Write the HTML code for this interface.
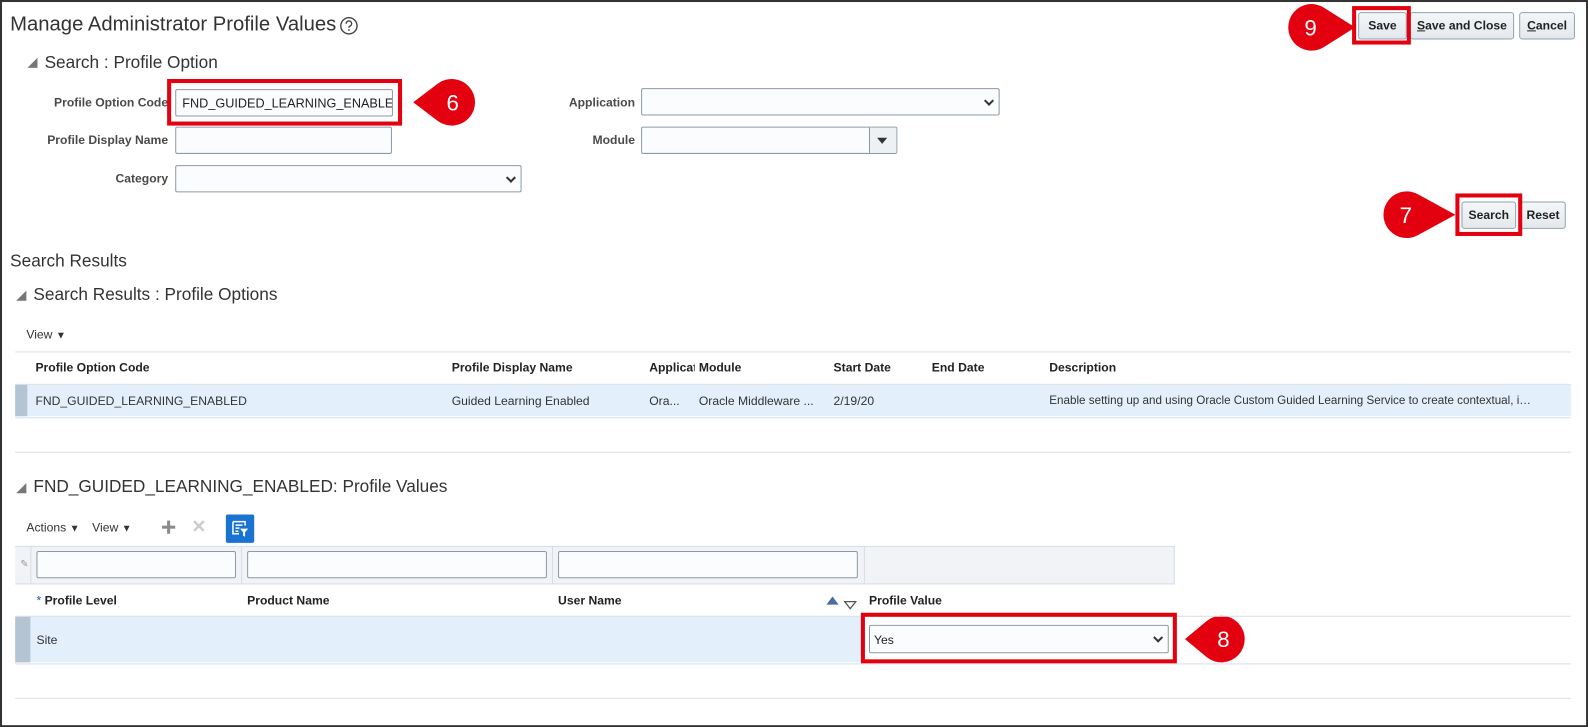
<!DOCTYPE html>
<html><head><meta charset="utf-8"><style>
*{box-sizing:border-box;margin:0;padding:0}
body{width:1588px;height:727px;background:#fff;font-family:"Liberation Sans",Arial,sans-serif;color:#333;position:relative;overflow:hidden}
#w{position:absolute;left:0;top:0;width:1568px;height:718px;transform:scale(1.0128);transform-origin:0 0}
.frame{position:absolute;left:0;top:0;width:1568px;height:718px;border:2px solid #333}
.a{position:absolute;white-space:nowrap}
.lbl{position:absolute;font-size:12px;font-weight:bold;color:#4a4a4a;text-align:right;white-space:nowrap}
.inp{position:absolute;border:1px solid #8c9aa7;background:#fbfcfe;border-radius:2px}
.chev{position:absolute;right:6px;top:50%;width:7px;height:7px;border-right:2px solid #333;border-bottom:2px solid #333;transform:translateY(-70%) rotate(45deg)}
.btn{position:absolute;border:1px solid #8ea2b3;border-radius:3px;background:linear-gradient(#f4f6f8,#e4e8ec);font-size:12px;font-weight:bold;color:#222;text-align:center;line-height:24px}
.red{position:absolute;border:4px solid #e3000f}
.tri{position:absolute;width:0;height:0;border-left:10px solid transparent;border-bottom:10px solid #777}
.h2{position:absolute;font-size:17px;color:#333;white-space:nowrap}
.hl{position:absolute;height:1px;background:#d6dfe7}
.th{position:absolute;font-size:12px;font-weight:bold;color:#222;white-space:nowrap}
.td{position:absolute;font-size:12px;color:#333;white-space:nowrap}
</style></head><body><div id="w">
<div class="frame"></div>

<div class="a" style="left:10px;top:13px;font-size:20px;color:#333">Manage Administrator Profile Values</div>
<svg class="a" style="left:335px;top:16px" width="19" height="19" viewBox="0 0 19 19"><circle cx="9.5" cy="9.5" r="8" fill="none" stroke="#444" stroke-width="1.4"/><path d="M6.8 7.4a2.7 2.7 0 1 1 3.6 2.5c-.7.3-.9.7-.9 1.5" fill="none" stroke="#444" stroke-width="1.4"/><circle cx="9.5" cy="13.6" r=".9" fill="#444"/></svg>

<div class="tri" style="left:27px;top:57px"></div>
<div class="h2" style="left:44px;top:52px">Search : Profile Option</div>

<div class="lbl" style="left:20px;width:146px;top:94px">Profile Option Code</div>
<div class="inp" style="left:173px;top:88px;width:215px;height:27px;overflow:hidden"><span class="a" style="left:6px;top:6px;font-size:12.5px;color:#222">FND_GUIDED_LEARNING_ENABLED</span></div>
<div class="red" style="left:165px;top:78px;width:232px;height:46px"></div>
<div class="lbl" style="left:20px;width:146px;top:131px">Profile Display Name</div>
<div class="inp" style="left:173px;top:125px;width:214px;height:27px"></div>
<div class="lbl" style="left:20px;width:146px;top:169px">Category</div>
<div class="inp" style="left:173px;top:163px;width:342px;height:27px"><div class="chev"></div></div>

<div class="lbl" style="left:500px;width:127px;top:94px">Application</div>
<div class="inp" style="left:633px;top:87px;width:354px;height:27px"><div class="chev"></div></div>
<div class="lbl" style="left:500px;width:127px;top:131px">Module</div>
<div class="inp" style="left:633px;top:125px;width:253px;height:27px"><div style="position:absolute;right:0;top:0;width:27px;height:25px;border-left:1px solid #8c9aa7;background:#eef1f4"></div><div class="a" style="right:9px;top:10px;border-left:5px solid transparent;border-right:5px solid transparent;border-top:6px solid #333"></div></div>

<div class="btn" style="left:1341px;top:12px;width:48px;height:27px">Save</div>
<div class="btn" style="left:1392px;top:12px;width:103px;height:27px"><u>S</u>ave and Close</div>
<div class="btn" style="left:1500px;top:12px;width:55px;height:27px"><u>C</u>ancel</div>
<div class="red" style="left:1335px;top:6px;width:58px;height:38px"></div>

<div class="btn" style="left:1443px;top:199px;width:54px;height:27px">Search</div>
<div class="btn" style="left:1501px;top:199px;width:45px;height:27px">Reset</div>
<div class="red" style="left:1437px;top:191px;width:66px;height:42px"></div>

<svg class="a" style="left:0;top:0" width="1568" height="718">
<g fill="#e3000f">
<path d="M408 101 L432.1 82.7 A23 23 0 1 1 432.1 119.3 Z"/>
<path d="M1338 27 L1307.3 7.6 A23 23 0 1 0 1307.3 46.4 Z"/>
<path d="M1437 212 L1400 191.8 A23 23 0 1 0 1400 232.2 Z"/>
<path d="M1170 631 L1191.3 613.3 A23 23 0 1 1 1191.3 648.7 Z"/>
</g>
<g fill="#fff" font-family="Liberation Sans,Arial,sans-serif" font-size="22" text-anchor="middle">
<text x="447" y="109">6</text><text x="1294" y="35">9</text><text x="1388" y="220">7</text><text x="1208" y="639">8</text>
</g></svg>

<div class="h2" style="left:10px;top:248px">Search Results</div>
<div class="tri" style="left:16px;top:287px"></div>
<div class="h2" style="left:33px;top:281px">Search Results : Profile Options</div>
<div class="td" style="left:26px;top:323px">View <span style="font-size:10px">▼</span></div>

<div class="hl" style="left:15px;top:347px;width:1536px"></div>
<div class="th" style="left:35px;top:356px">Profile Option Code</div>
<div class="th" style="left:446px;top:356px">Profile Display Name</div>
<div class="th" style="left:641px;top:356px;width:45px;overflow:hidden">Application</div>
<div class="th" style="left:690px;top:356px">Module</div>
<div class="th" style="left:823px;top:356px">Start Date</div>
<div class="th" style="left:920px;top:356px">End Date</div>
<div class="th" style="left:1036px;top:356px">Description</div>
<div class="hl" style="left:15px;top:379px;width:1536px"></div>
<div class="a" style="left:15px;top:380px;width:1536px;height:31px;background:#e3effb"></div>
<div class="a" style="left:15px;top:380px;width:12px;height:31px;background:#b4c4d3"></div>
<div class="td" style="left:35px;top:389px">FND_GUIDED_LEARNING_ENABLED</div>
<div class="td" style="left:446px;top:389px">Guided Learning Enabled</div>
<div class="td" style="left:641px;top:389px">Ora...</div>
<div class="td" style="left:690px;top:389px">Oracle Middleware ...</div>
<div class="td" style="left:823px;top:389px">2/19/20</div>
<div class="td" style="left:1036px;top:389px;width:480px;overflow:hidden;text-overflow:ellipsis;font-size:11.5px;line-height:14px">Enable setting up and using Oracle Custom Guided Learning Service to create contextual, in-app guidance</div>
<div class="hl" style="left:15px;top:412px;width:1536px"></div>
<div class="hl" style="left:15px;top:446px;width:1536px"></div>

<div class="tri" style="left:16px;top:477px"></div>
<div class="h2" style="left:33px;top:471px">FND_GUIDED_LEARNING_ENABLED: Profile Values</div>
<div class="td" style="left:26px;top:514px">Actions <span style="font-size:10px">▼</span></div>
<div class="td" style="left:91px;top:514px">View <span style="font-size:10px">▼</span></div>
<div class="a" style="left:160px;top:519px;width:13px;height:3px;background:#8a8a8a"></div>
<div class="a" style="left:165px;top:514px;width:3px;height:13px;background:#8a8a8a"></div>
<div class="a" style="left:189px;top:510px;font-size:18px;color:#ccc;font-weight:bold">✕</div>
<div class="a" style="left:223px;top:508px;width:28px;height:28px;background:#1a73d0;border-radius:2px"></div>
<svg class="a" style="left:229px;top:514px" width="16" height="16" viewBox="0 0 16 16"><g fill="none" stroke="#fff" stroke-width="1.5"><path d="M1 1h12v4M1 1v12h6M3.5 4.5h7M3.5 7.5h4M3.5 10.5h3"/></g><path d="M8 8h8l-3 3.5V16l-2-1v-3.5z" fill="#fff"/></svg>

<div class="a" style="left:15px;top:539px;width:1145px;height:38px;background:#f1f3f6;border-top:1px solid #d6dfe7;border-bottom:1px solid #d6dfe7"></div>
<div class="a" style="left:30px;top:539px;width:1px;height:38px;background:#d6dfe7"></div>
<div class="a" style="left:238px;top:539px;width:1px;height:38px;background:#d6dfe7"></div>
<div class="a" style="left:545px;top:539px;width:1px;height:38px;background:#d6dfe7"></div>
<div class="a" style="left:853px;top:539px;width:1px;height:38px;background:#d6dfe7"></div>
<div class="a" style="left:1159px;top:539px;width:1px;height:38px;background:#d6dfe7"></div>
<div class="a" style="left:20px;top:552px;font-size:10px;color:#999">✎</div>
<div class="inp" style="left:36px;top:544px;width:197px;height:27px"></div>
<div class="inp" style="left:244px;top:544px;width:296px;height:27px"></div>
<div class="inp" style="left:551px;top:544px;width:296px;height:27px"></div>

<div class="th" style="left:36px;top:586px"><span style="color:#1a5ea8;font-weight:normal">*</span> Profile Level</div>
<div class="th" style="left:244px;top:586px">Product Name</div>
<div class="th" style="left:551px;top:586px">User Name</div>
<div class="a" style="left:816px;top:589px;border-left:6px solid transparent;border-right:6px solid transparent;border-bottom:8px solid #4a6d9c"></div>
<div class="a" style="left:833px;top:589px;width:13px;height:9px"><svg width="13" height="9"><path d="M1 1h11L6.5 8z" fill="#fff" stroke="#555" stroke-width="1.3"/></svg></div>
<div class="th" style="left:858px;top:586px">Profile Value</div>
<div class="hl" style="left:15px;top:608px;width:1536px"></div>
<div class="a" style="left:15px;top:609px;width:838px;height:45px;background:#e3effb"></div>
<div class="a" style="left:15px;top:609px;width:15px;height:45px;background:#b4c4d3"></div>
<div class="td" style="left:36px;top:625px">Site</div>
<div class="inp" style="left:858px;top:617px;width:296px;height:28px"><span class="a" style="left:4px;top:7px;font-size:12px;color:#222">Yes</span><div class="chev"></div></div>
<div class="red" style="left:850px;top:605px;width:312px;height:50px"></div>
<div class="hl" style="left:15px;top:655px;width:1536px"></div>
<div class="hl" style="left:15px;top:689px;width:1536px"></div>
</div></body></html>
